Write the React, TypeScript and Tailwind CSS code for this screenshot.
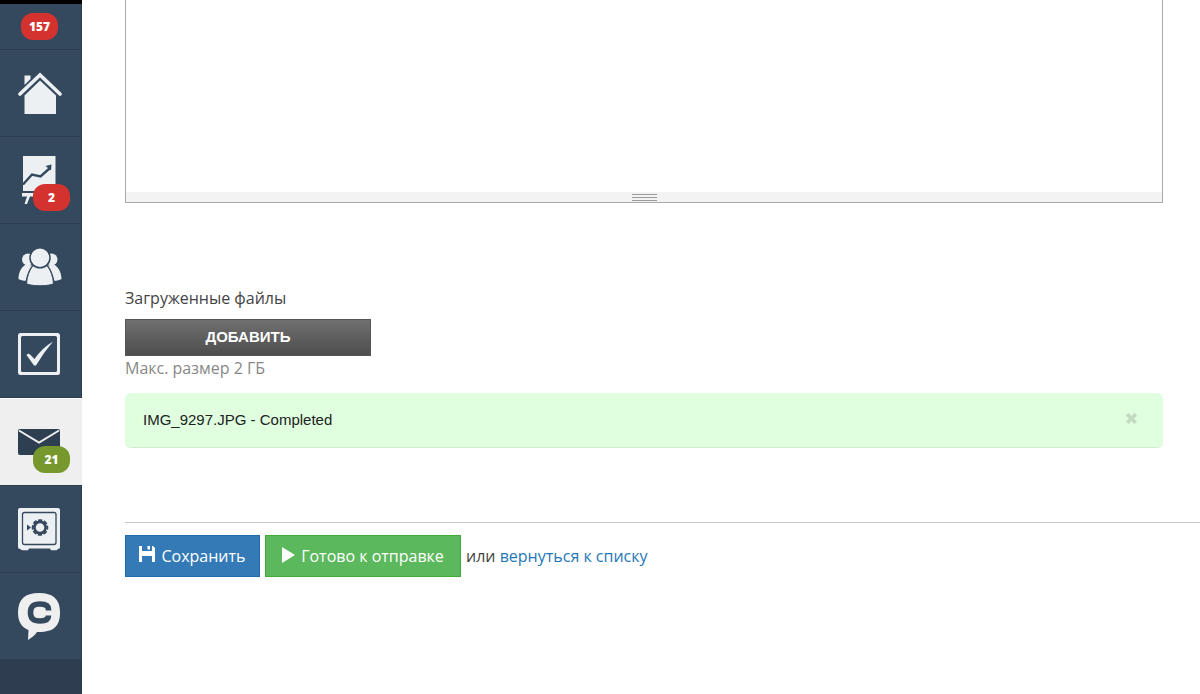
import type { ReactNode } from "react";

type NavItem = {
  label: string;
  icon: ReactNode;
  badge?: number;
  active?: boolean;
};

const HomeIcon = () => (
  <svg width="44" height="44" viewBox="0 0 44 44" fill="#ecf0f2">
    <path d="M6.500 4.500h6v3.500l-6 6z" />
    <path
      d="M2 23 22 4l20 19"
      fill="none"
      stroke="#ecf0f2"
      strokeWidth="3.600"
      strokeLinecap="round"
      strokeLinejoin="miter"
    />
    <path d="M22 9.500 6.500 24.500V43h31.500V24.500z" />
  </svg>
);

const ChartIcon = () => (
  <svg width="44" height="48" viewBox="0 0 44 48">
    <path d="M5 0h32.500v35H5z" fill="#ecf0f2" />
    <path d="M4 37h34v3.500H4zM9 40.500h3L9 48H6.500z" fill="#ecf0f2" />
    <path d="m5 28.500 9-10 8.500 2 9.500-8.500" fill="none" stroke="#34495e" strokeWidth="2.400" />
    <path d="m27.500 10 6-1.500L33 14.500z" fill="#34495e" />
  </svg>
);

const PeopleIcon = () => (
  <svg width="44" height="38" viewBox="0 0 44 38" fill="#ecf0f2">
    <circle cx="10" cy="11.500" r="6" />
    <circle cx="33.500" cy="11.500" r="6" />
    <path d="M8 16.500C3.500 19 .5 24 .5 31c2 1.200 4.500 1.800 7.200 1.800C9 26 11 21.500 14 17.500z" />
    <path d="M36 16.500c4 2.500 7.500 7.500 7.500 14.500-2 1.200-4.500 1.800-7.200 1.800C35 26 33 21.500 30 17.500z" />
    <path
      d="M15 17.500C11.500 22 9 28 8.500 35.500 12 38.500 32 38.500 35.500 35.500 35 28 32.500 22 29 17.500z"
      stroke="#34495e"
      strokeWidth="1"
    />
    <circle cx="22" cy="9.800" r="10" stroke="#34495e" strokeWidth="1.500" />
  </svg>
);

const TaskIcon = () => (
  <svg width="44" height="44" viewBox="1 0 44 44">
    <rect x="1" y="1" width="42" height="42" rx="2.500" fill="#ecf0f2" />
    <rect x="4" y="4" width="36" height="36" rx="1.500" fill="#34495e" />
    <path d="M9.500 23q2-2 3.500-.5l4.500 4.500Q25 16 36 9.500 27 20 19 33.500h-2z" fill="#ecf0f2" />
  </svg>
);

const MailIcon = () => (
  <svg width="44" height="26" viewBox="1 0 44 26">
    <rect x="1" y="0" width="42" height="26" rx="2" fill="#2e3f51" />
    <path d="m2 1.500 20 12 20-12" fill="none" stroke="#efefef" strokeWidth="2" />
  </svg>
);

const SafeIcon = () => (
  <svg width="44" height="44" viewBox="1 0 44 44">
    <path
      d="M3 1h38a2 2 0 0 1 2 2v37a2 2 0 0 1-2 2l-1.500 1.200h-5.500L33 41.500H12l-1 1.700H5.500L3 42a2 2 0 0 1-2-2V3a2 2 0 0 1 2-2z"
      fill="#ecf0f2"
    />
    <rect x="5.500" y="5.500" width="33.500" height="32" rx="2" fill="none" stroke="#34495e" strokeWidth="1.300" />
    <path d="M10 17.500 14 20.500 10 23.500z" fill="#34495e" />
    <circle cx="23" cy="20.500" r="5.600" fill="none" stroke="#34495e" strokeWidth="2.600" />
    <circle
      cx="23"
      cy="20.500"
      r="7.400"
      fill="none"
      stroke="#34495e"
      strokeWidth="1.800"
      strokeDasharray="4.200 1.612"
      strokeDashoffset="2.100"
    />
  </svg>
);

const ChatIcon = () => (
  <svg width="44" height="48" viewBox="1 0 44 48">
    <path
      d="M22 1C8 1 1 7 1 20.500c0 8.500 3 14.500 10.500 17.500L11 48c4-2.500 7-5 9-8h2c15 0 21-6 21-19.500C43 7 36 1 22 1z"
      fill="#efefef"
    />
    <path
      d="M31.500 18.500v-1c0-4-3-5.500-8.500-5.500-6.500 0-9.500 2.500-9.500 8.500s3 8.500 9.500 8.500c5.500 0 8.500-1.500 8.500-5.500"
      fill="none"
      stroke="#34495e"
      strokeWidth="5.600"
    />
  </svg>
);

const navItems: NavItem[] = [
  { label: "Главная", icon: <HomeIcon /> },
  { label: "Отчёты", icon: <ChartIcon />, badge: 2 },
  { label: "Контакты", icon: <PeopleIcon /> },
  { label: "Задачи", icon: <TaskIcon /> },
  { label: "Почта", icon: <MailIcon />, badge: 21, active: true },
  { label: "Сейф", icon: <SafeIcon /> },
  { label: "Чат", icon: <ChatIcon /> },
];

function Sidebar() {
  return (
    <nav className="flex w-[82px] shrink-0 flex-col border-t-4 border-black bg-[#2e3e50]">
      <a
        href="#"
        className="flex h-[46px] items-center border-r border-b border-[#2c3e50] bg-[#34495e] pl-[21px]"
      >
        <span className="flex h-[27px] w-[37px] items-center justify-center rounded-xl bg-[#d3322e] text-xs font-extrabold text-white">
          157
        </span>
      </a>
      {navItems.map((item) => (
        <a
          key={item.label}
          href="#"
          aria-label={item.label}
          className={`relative flex items-center border-b border-[#2c3e50] pl-[18px] ${
            item.active ? "h-[88px] border-t border-t-white bg-[#efefef]" : "h-[87px] border-r bg-[#34495e]"
          }`}
        >
          {item.icon}
          {item.badge && (
            <span
              className={`absolute bottom-3 left-[33px] flex h-[27px] w-[37px] items-center justify-center rounded-xl text-xs font-extrabold text-white ${
                item.active ? "bg-[#76982d]" : "bg-[#d3322e]"
              }`}
            >
              {item.badge}
            </span>
          )}
        </a>
      ))}
    </nav>
  );
}

export default function App() {
  return (
    <div className="flex min-h-screen bg-white font-['Open_Sans',sans-serif] text-base text-[#444]">
      <Sidebar />
      <main className="min-w-0 flex-1 pl-[43px]">
        <div className="mr-[37px] border border-t-0 border-[#a9a9a9]">
          <textarea
            aria-label="Сообщение"
            className="block h-48 w-full resize-none bg-white p-3 outline-none"
          />
          <div className="flex h-[10px] items-center justify-center bg-[#f3f3f3]">
            <span className="h-[7px] w-[25px] border-y border-[#999] py-[2px]">
              <span className="block h-px bg-[#999]" />
            </span>
          </div>
        </div>

        <section className="mt-[83px] mr-[37px]">
          <h2 className="leading-6">Загруженные файлы</h2>
          <button
            type="button"
            className="mt-[9px] block h-[37px] w-[246px] border border-[#555] bg-linear-to-b from-[#707070] to-[#4e4e4e] font-['Liberation_Sans',sans-serif] text-[15px] font-bold text-white"
          >
            ДОБАВИТЬ
          </button>
          <p className="leading-6 text-[#888]">Макс. размер 2 ГБ</p>
          <div className="mt-[13px] flex h-[55px] items-center justify-between rounded-md border-b border-dotted border-[#c5d9c5] bg-[#dfffdf] pr-[26px] pl-[18px] font-['Liberation_Sans',sans-serif] text-[15px] text-[#222]">
            <span>IMG_9297.JPG - Completed</span>
            <button type="button" aria-label="Удалить файл" className="mb-1">
              <svg width="11" height="11" viewBox="0 0 11 11" stroke="#c2d9c2" strokeWidth="3.600">
                <path d="m1.200 1.200 8.600 8.600M9.800 1.200 1.200 9.800" />
              </svg>
            </button>
          </div>
        </section>

        <div className="mt-[74px] flex items-center border-t border-[#c8c8c8] pt-3">
          <button
            type="button"
            className="flex h-[42px] w-[135px] items-center justify-center gap-[6px] border border-[#1f6bb0] bg-[#337ab7] text-white"
          >
            <svg width="16" height="16" viewBox="0 0 16 16" fill="currentColor" className="mb-1">
              <path d="M0 0h3v5h10V0h1l2 2v14h-3v-6H3v6H0zM8.500 0h2.500v3.500H8.500z" />
            </svg>
            Сохранить
          </button>
          <button
            type="button"
            className="ml-[5px] flex h-[42px] w-[196px] items-center justify-center gap-[6px] border border-[#3eaa3e] bg-[#5cb85c] text-white"
          >
            <svg width="13" height="16" viewBox="0 0 13 16" fill="currentColor" className="mb-[2px]">
              <path d="M0 0v16l13-8z" />
            </svg>
            Готово к отправке
          </button>
          <span className="ml-[5px]">
            или{" "}
            <a href="#" className="text-[#1f78b8]">
              вернуться к списку
            </a>
          </span>
        </div>
      </main>
    </div>
  );
}
